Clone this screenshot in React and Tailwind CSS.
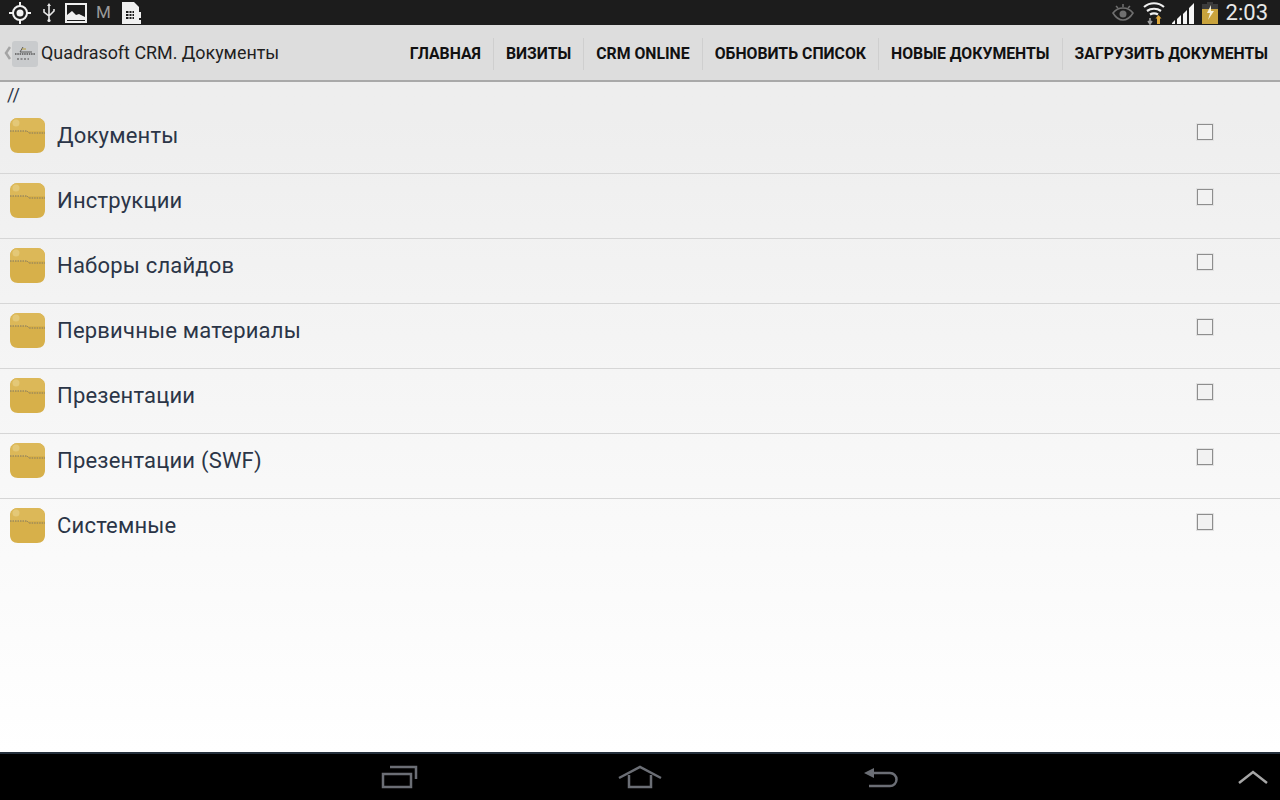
import React from "react";

const menu = ["Главная", "Визиты", "CRM Online", "Обновить список", "Новые документы", "Загрузить документы"];
const folders = ["Документы", "Инструкции", "Наборы слайдов", "Первичные материалы", "Презентации", "Презентации (SWF)", "Системные"];

function StatusLeft() {
  return (
    <div className="flex items-center">
      <svg width="22" height="22" viewBox="0 0 22 22" className="ml-[9px]" fill="none" stroke="#f2f2f2">
        <circle cx="11" cy="11" r="7" strokeWidth="2" />
        <circle cx="11" cy="11" r="3.5" fill="#f2f2f2" stroke="none" />
        <path d="M11 0v4M11 18v4M0 11h4M18 11h4" strokeWidth="2" />
      </svg>
      <svg width="14" height="20" viewBox="0 0 14 20" className="ml-[11px]" fill="none" stroke="#e8e8e8" strokeWidth="1.6">
        <path d="M7 2v15M2 6v3l5 4 5-5V6" />
        <path d="M7 0l2 3H5z" fill="#e8e8e8" stroke="none" />
        <circle cx="7" cy="17.5" r="1.6" fill="#e8e8e8" stroke="none" />
      </svg>
      <svg width="22" height="20" viewBox="0 0 22 20" className="ml-[9px]">
        <rect x="1" y="1" width="20" height="18" fill="#1c1c1c" stroke="#f0f0f0" strokeWidth="2" />
        <path d="M2 16V12l5-4 4 4 3-1 6 3v3H2z" fill="#f0f0f0" />
      </svg>
      <span className="ml-[9px] text-[17px] leading-none text-[#9a9a9a]">M</span>
      <svg width="19" height="22" viewBox="0 0 19 22" className="ml-[11px]">
        <path d="M0 0h12l5 5v17H0z" fill="#f0f0f0" />
        <path d="M4 9h8v8H4z" fill="#1c1c1c" />
        <path d="M4 11.5h8M4 14.5h8M7 9v8M10 9v8" stroke="#f0f0f0" strokeWidth="1" />
        <path d="M15 10h4v6h-4zM15 18h4v4h-4z" fill="#f0f0f0" />
      </svg>
    </div>
  );
}

function StatusRight() {
  return (
    <div className="flex items-center">
      <svg width="22" height="18" viewBox="0 0 22 18" fill="none" stroke="#6f6f6f">
        <path d="M1 9c3-4 6-5 10-5s7 1 10 5c-3 5-6 7-10 7s-7-2-10-7z" strokeWidth="1.6" />
        <circle cx="11" cy="10" r="3.5" fill="#6f6f6f" stroke="none" />
        <path d="M4 2l2 2M11 0v3M18 2l-2 2" strokeWidth="1.5" />
      </svg>
      <svg width="22" height="24" viewBox="0 0 22 24" className="ml-[9px]" fill="none" stroke="#f0f0f0" strokeWidth="2.2">
        <path d="M1 6c6-5 14-5 20 0M4 10c4-3 10-3 14 0M7 13.5c2.5-1.5 5.5-1.5 8 0" />
        <path d="M7 17v5M5 20l2 3 2-3" stroke="#a0a0a0" strokeWidth="1.6" />
        <path d="M14 23v-6h3v6z" fill="#e0a93a" stroke="none" />
        <path d="M15.5 14l3 3.5h-6z" fill="#e0a93a" stroke="none" />
      </svg>
      <svg width="24" height="22" viewBox="0 0 24 22" className="ml-[7px]" fill="#f5f5f5">
        <path d="M0 22h3v-4l-3 3zM5 22h4v-9l-4 4zM11 22h4V8l-4 4zM17 22h5V1l-5 5z" />
      </svg>
      <svg width="16" height="22" viewBox="0 0 16 22" className="ml-[6px]">
        <path d="M5 0h6v2h5v20H0V2h5z" fill="#3c3c3c" />
        <path d="M0 7h16v15H0z" fill="#c9a33c" />
        <path d="M9 3L5 11h3l-2 7 6-9H9z" fill="#f5f0d8" />
      </svg>
      <span className="ml-[8px] mr-[12px] text-[22px] leading-none text-[#e8e8e8]">2:03</span>
    </div>
  );
}

function Logo() {
  return (
    <div className="flex h-[26px] w-[26px] items-center justify-center rounded-[3px] bg-[#c9cbcd]">
      <svg width="22" height="20" viewBox="0 0 22 20" fill="none">
        <path d="M9 3l-3 5h12" stroke="#5a5a5a" strokeWidth="1" />
        <path d="M1 10h20" stroke="#555" strokeWidth="1.5" strokeDasharray="1.5 0.8" />
        <path d="M3 15h12" stroke="#777" strokeWidth="1.5" strokeDasharray="2 1.5" />
        <path d="M8 5h4" stroke="#b59a3a" strokeWidth="1" />
      </svg>
    </div>
  );
}

function Folder() {
  return (
    <svg width="35" height="35" viewBox="0 0 35 35" className="shrink-0">
      <path d="M8 0h19c5 0 8 3 8 8v19c0 5-3 8-8 8H8c-5 0-8-3-8-8V8c0-5 3-8 8-8z" fill="#d7b04a" />
      <path d="M8 0h19c5 0 8 3 8 8v5H0V8c0-5 3-8 8-8z" fill="#dcb858" />
      <circle cx="6" cy="5" r="3.5" fill="#e4c877" />
      <path d="M0 13h17l2 2h16" fill="none" stroke="#7f7660" strokeWidth="1" strokeDasharray="1.5 1" />
    </svg>
  );
}

function FolderRow({ name }) {
  return (
    <div className="flex h-[65px] items-start border-b border-[#d6d6d6] pl-[10px] pt-[9px] last:border-b-0">
      <Folder />
      <span className="ml-[12px] mt-[5px] text-[22px] leading-[26px] tracking-[0.2px] text-[#2b3547]">{name}</span>
      <div className="ml-auto mr-[67px] mt-[6px] h-[16px] w-[16px] border border-[#8e8e8e] bg-[#f2f2f2] shadow-[0_0_0_1px_#e2e2e2]" />
    </div>
  );
}

export default function App() {
  return (
    <div className="flex h-screen w-full flex-col overflow-hidden bg-white font-['Roboto',sans-serif]">
      <div className="flex h-[25px] shrink-0 items-center justify-between bg-[#1c1c1c]">
        <StatusLeft />
        <StatusRight />
      </div>

      <div className="flex h-[57px] shrink-0 items-center border-b-2 border-[#a9a9a9] bg-[#dddddd] pt-[1px]">
        <svg width="7" height="14" viewBox="0 0 7 14" className="ml-[4px]" fill="none" stroke="#a4a4a4" strokeWidth="2.5">
          <path d="M6 1L2 7l4 6" />
        </svg>
        <div className="ml-[1px] mt-[1px]"><Logo /></div>
        <span className="ml-[3px] mt-[1px] text-[17.9px] text-[#1f1f1f]">Quadrasoft CRM. Документы</span>
        <div className="ml-auto mt-[1px] flex h-[32px] items-center">
          {menu.map((item, i) => (
            <div key={item} className={`flex h-full items-center px-[12px] text-[15.8px] font-bold uppercase text-[#111111] ${i ? "border-l border-[#cfcfcf]" : ""}`}>
              {item}
            </div>
          ))}
        </div>
      </div>

      <div className="flex min-h-0 flex-1 flex-col bg-gradient-to-b from-[#eeeeee] from-[5%] via-[#f9f9f9] via-[65%] to-white">
        <div className="h-[27px] pl-[7px] pt-[3px] text-[18px] leading-[20px] text-[#2b3547]">//</div>
        <div>
          {folders.map((name) => (
            <FolderRow key={name} name={name} />
          ))}
        </div>
      </div>

      <div className="relative flex h-[48px] shrink-0 items-center border-t-2 border-[#25303c] bg-black">
        <svg width="38" height="24" viewBox="0 0 38 24" className="ml-[380px]" fill="none" stroke="#6b6e75" strokeWidth="2.5">
          <path d="M10 2h26v12" />
          <path d="M3 9h28v13H3z" />
        </svg>
        <svg width="44" height="24" viewBox="0 0 44 24" className="ml-[200px]" fill="none" stroke="#6b6e75" strokeWidth="2.5">
          <path d="M1 13L22 2l21 11" />
          <path d="M11 10v12h22V10" />
        </svg>
        <svg width="34" height="24" viewBox="0 0 34 24" className="ml-[202px]" fill="none" stroke="#6b6e75" strokeWidth="2.5">
          <path d="M8 8h18a6 6 0 0 1 0 13H5" />
          <path d="M0 8l10-5v10z" fill="#6b6e75" stroke="none" />
        </svg>
        <svg width="30" height="16" viewBox="0 0 30 16" className="ml-auto mr-[12px]" fill="none" stroke="#a6a6a6" strokeWidth="2.5">
          <path d="M1 14L15 3l14 11" />
        </svg>
      </div>
    </div>
  );
}
